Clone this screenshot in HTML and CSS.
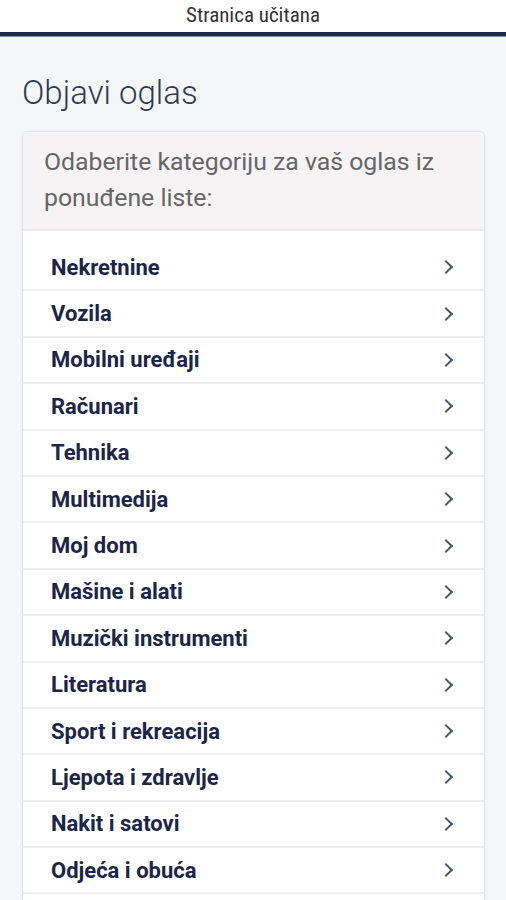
FILE: index.html
```html
<!DOCTYPE html>
<html>
<head>
  <title>Objavi oglas</title>
  <link rel="stylesheet" href="styles.css">
</head>
<body>
  <div class="topbar">
    <span class="status">Stranica učitana</span>
  </div>

  <div class="container">
    <h2>Objavi oglas</h2>

    <div class="card">
      <div class="card-header">Odaberite kategoriju za vaš oglas iz ponuđene liste:</div>
      <ul class="categories">
        <li><a href="#">Nekretnine</a></li>
        <li><a href="#">Vozila</a></li>
        <li><a href="#">Mobilni uređaji</a></li>
        <li><a href="#">Računari</a></li>
        <li><a href="#">Tehnika</a></li>
        <li><a href="#">Multimedija</a></li>
        <li><a href="#">Moj dom</a></li>
        <li><a href="#">Mašine i alati</a></li>
        <li><a href="#">Muzički instrumenti</a></li>
        <li><a href="#">Literatura</a></li>
        <li><a href="#">Sport i rekreacija</a></li>
        <li><a href="#">Ljepota i zdravlje</a></li>
        <li><a href="#">Nakit i satovi</a></li>
        <li><a href="#">Odjeća i obuća</a></li>
        <li><a href="#">Ostalo</a></li>
      </ul>
    </div>
  </div>
</body>
</html>
```

FILE: styles.css
```css
body {
  font-family: Roboto, "Noto Sans", sans-serif;
  background-color: #f5f6f8;
  margin: 0;
}
.topbar {
  background: #fff;
  height: 32px;
  border-bottom: 4px solid #1c2a48;
  box-shadow: 0 1px 0 #7d95b5;
  text-align: center;
}
.status {
  font-family: "Liberation Sans Narrow", "Roboto Condensed", Roboto, sans-serif;
  font-size: 21px;
  line-height: 31px;
  color: #333;
}
.container {
  padding: 0 21px 0 22px;
}
h2 {
  font-size: 33px;
  font-weight: 300;
  color: #2c3a55;
  margin: 39px 0 20px 0;
  line-height: 36px;
}
.card {
  background: #fff;
  border: 1px solid #e4e4e6;
  border-radius: 5px;
  box-shadow: 0 1px 3px rgba(0, 0, 0, 0.06);
  overflow: hidden;
}
.card-header {
  background: #f5f3f3;
  color: #666;
  font-size: 24.8px;
  line-height: 36px;
  padding: 12px 30px 13px 21px;
  border-bottom: 2px solid #ebebeb;
}
.categories {
  list-style: none;
  margin: 0;
  padding: 14px 0 0 0;
}
.categories li {
  border-bottom: 2px solid #eeeeee;
}
.categories a {
  display: flex;
  align-items: center;
  justify-content: space-between;
  box-sizing: border-box;
  height: 44.4px;
  padding: 0 33px 0 28px;
  font-size: 22px;
  font-weight: bold;
  color: #1b2547;
  text-decoration: none;
}
.categories a::after {
  content: "";
  width: 8px;
  height: 8px;
  border-right: 2px solid #4b5567;
  border-top: 2px solid #4b5567;
  transform: rotate(45deg);
}
```
